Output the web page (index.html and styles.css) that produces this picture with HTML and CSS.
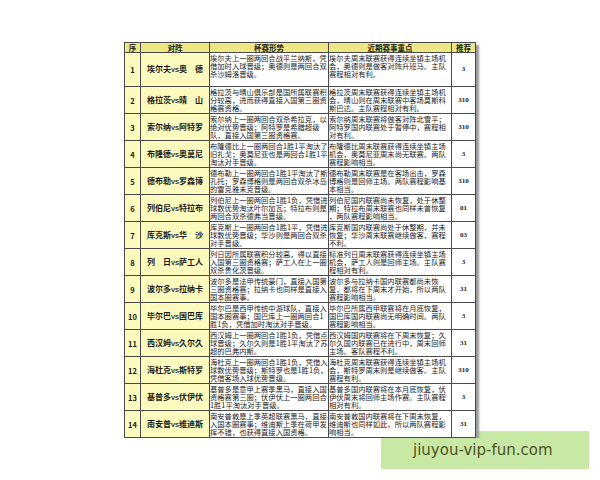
FILE: index.html
```html
<!DOCTYPE html>
<html>
<head>
<meta charset="utf-8">
<link rel="stylesheet" href="styles.css">
</head>
<body>
<div class="page">
<table class="tbl">
<colgroup><col class="c-no"><col class="c-vs"><col class="c-cup"><col class="c-recent"><col class="c-tip"></colgroup>
<thead>
<tr><th>序</th><th>对阵</th><th>杯赛形势</th><th>近期赛事重点</th><th>推荐</th></tr>
</thead>
<tbody>
<tr class="first"><td class="no">1</td><td class="vs">埃尔夫<span class="v">VS</span>奥　德</td><td class="txt"><div class="cell">埃尔夫上一圈两回合战平兰纳斯，凭<br>借加时入球晋级；奥德则是两回合双<br>杀沙姆洛晋级。</div></td><td class="txt"><div class="cell">埃尔夫周末联赛获得连续坐镇主场机<br>会，奥德则是做客对阵升班马。主队<br>赛程相对有利。</div></td><td class="tip">3</td></tr>
<tr><td class="no">2</td><td class="vs">格拉茨<span class="v">VS</span>晴　山</td><td class="txt"><div class="cell">格拉茨与晴山俱乐部是国所属联赛积<br>分较高，进而获得直接入国第三圈资<br>格赛资格。</div></td><td class="txt"><div class="cell">格拉茨周末联赛获得连续坐镇主场机<br>会，晴山则在周末联赛中客场莫斯科<br>斯巴达。主队赛程相对有利。</div></td><td class="tip">310</td></tr>
<tr><td class="no">3</td><td class="vs">索尔纳<span class="v">VS</span>阿特罗</td><td class="txt"><div class="cell">索尔纳上一圈两回合双杀希拉克，以<br>绝对优势晋级；阿特罗是希腊超级<br>队，直接入国第三圈资格赛。</div></td><td class="txt"><div class="cell">索尔纳周末联赛将做客对阵北雪平；<br>阿特罗国内联赛处于暂停中，赛程相<br>对有利。</div></td><td class="tip">310</td></tr>
<tr><td class="no">4</td><td class="vs">布隆德<span class="v">VS</span>奥莫尼</td><td class="txt"><div class="cell">布隆德比上一圈两回合1胜1平淘汰了<br>旧扎戈；奥莫尼亚也是两回合1胜1平<br>淘汰对手晋级。</div></td><td class="txt"><div class="cell">布隆德比周末联赛获得连续坐镇主场<br>机会，奥莫尼亚周末尚无联赛。两队<br>赛程影响相当。</div></td><td class="tip">3</td></tr>
<tr><td class="no">5</td><td class="vs">德布勒<span class="v">VS</span>罗森博</td><td class="txt"><div class="cell">德布勒上一圈两回合1胜1平淘汰了斯<br>孔托；罗森博格则是两回合双杀冰岛<br>的雷克雅未克晋级。</div></td><td class="txt"><div class="cell">德布勒周末联赛是在客场出击，罗森<br>博格则是回师主场。两队赛程影响基<br>本相当。</div></td><td class="tip">310</td></tr>
<tr><td class="no">6</td><td class="vs">列伯尼<span class="v">VS</span>特拉布</td><td class="txt"><div class="cell">列伯尼上一圈两回合1胜1负，凭借进<br>球数优势淘汰叶尔加瓦；特拉布则是<br>两回合双杀德弗当晋级。</div></td><td class="txt"><div class="cell">列伯尼国内联赛尚未恢复，处于休整<br>期；特拉布周末联赛也同样未曾恢复<br>，两队赛程影响相当。</div></td><td class="tip">01</td></tr>
<tr><td class="no">7</td><td class="vs">库克斯<span class="v">VS</span>华　沙</td><td class="txt"><div class="cell">库克斯上一圈两回合1胜1平，凭借进<br>球数优势晋级；华沙则是两回合双杀<br>对手晋级。</div></td><td class="txt"><div class="cell">库克斯国内联赛尚处于休整期，并未<br>恢复；华沙周末联赛继续做客，赛程<br>不利。</div></td><td class="tip">03</td></tr>
<tr><td class="no">8</td><td class="vs">列　日<span class="v">VS</span>萨工人</td><td class="txt"><div class="cell">列日因所属联赛积分较高，得以直接<br>入国第三圈资格赛；萨工人在上一圈<br>双杀贵化茨晋级。</div></td><td class="txt"><div class="cell">标准列日周末联赛获得连续坐镇主场<br>机会，萨工人则是回师主场。主队赛<br>程相对有利。</div></td><td class="tip">3</td></tr>
<tr><td class="no">9</td><td class="vs">波尔多<span class="v">VS</span>拉纳卡</td><td class="txt"><div class="cell">波尔多是法甲传统豪门，直接入国第<br>三圈资格赛；拉纳卡也同样是直接入<br>国本圈赛事。</div></td><td class="txt"><div class="cell">波尔多与拉纳卡国内联赛都尚未恢<br>复，都将在下周末才开始，所以两队<br>赛程影响相当。</div></td><td class="tip">31</td></tr>
<tr><td class="no">10</td><td class="vs">毕尔巴<span class="v">VS</span>国巴库</td><td class="txt"><div class="cell">毕尔巴是西甲传统中游球队，直接入<br>国本圈赛事；国巴库上一圈两回合1<br>胜1负，凭借加时淘汰对手晋级。</div></td><td class="txt"><div class="cell">毕尔巴所属西甲联赛将在月底恢复，<br>国巴库国内联赛尚无明确时间。两队<br>赛程影响相当。</div></td><td class="tip">3</td></tr>
<tr><td class="no">11</td><td class="vs">西汉姆<span class="v">VS</span>久尔久</td><td class="txt"><div class="cell">西汉姆上一圈两回合1胜1负，凭借点<br>球晋级；久尔久则是1胜1平淘汰了苏<br>超的巴弗内斯。</div></td><td class="txt"><div class="cell">西汉姆国内联赛将在下周末恢复；久<br>尔久国内联赛已在进行中，周末回师<br>主场。客队赛程不利。</div></td><td class="tip">31</td></tr>
<tr><td class="no">12</td><td class="vs">海杜克<span class="v">VS</span>斯特罗</td><td class="txt"><div class="cell">海杜克上一圈两回合1胜1负，凭借入<br>球数优势晋级；斯特罗也是1胜1负，<br>凭借客场入球优势晋级。</div></td><td class="txt"><div class="cell">海杜克周末联赛获得连续坐镇主场机<br>会，斯特罗周末则是继续做客。主队<br>赛程有利。</div></td><td class="tip">310</td></tr>
<tr><td class="no">13</td><td class="vs">基普多<span class="v">VS</span>伏伊伏</td><td class="txt"><div class="cell">基普多是意甲上赛季黑马，直接入国<br>资格赛第三圈；伏伊伏上一圈两回合<br>1胜1平淘汰对手晋级。</div></td><td class="txt"><div class="cell">基普多国内联赛将在本月底恢复，伏<br>伊伏周末将回师主场作赛。主队赛程<br>相对有利。</div></td><td class="tip">3</td></tr>
<tr><td class="no">14</td><td class="vs">南安普<span class="v">VS</span>维迪斯</td><td class="txt"><div class="cell">南安普敦是上季英超联赛黑马，直接<br>入国本圈赛事；维迪斯上季在荷甲发<br>挥不错，也获得直接入国资格。</div></td><td class="txt"><div class="cell">南安普敦国内联赛将在下周末恢复，<br>维迪斯也同样如此，所以两队赛程影<br>响相当。</div></td><td class="tip">31</td></tr>
</tbody>
</table>
</div>
<div class="mark">jiuyou-vip-fun.com</div>
</body>
</html>
```

FILE: styles.css
```css
html, body {
  margin: 0;
  padding: 0;
  background: #ffffff;
}

.page {
  padding: 42px 0 0 124px;
}

.tbl {
  position: relative;
  z-index: 1;
  border-collapse: collapse;
  table-layout: fixed;
  width: 351px;
  font-family: "Noto Sans CJK SC", "Liberation Serif", serif;
  color: #1a1a1a;
  box-shadow: 3px 3px 2px #9a9a9a;
}

.c-no { width: 16px; }
.c-vs { width: 69px; }
.c-cup { width: 119px; }
.c-recent { width: 123px; }
.c-tip { width: 24px; }

.tbl th,
.tbl td {
  border: 1px solid #4a4a4a;
  padding: 0;
  overflow: hidden;
}

.tbl th {
  background: #eee884;
  height: 9px;
  font-size: 7.5px;
  line-height: 8px;
  font-weight: bold;
  text-align: center;
}

.tbl tbody tr {
  height: 27px;
}

.tbl tbody tr.first {
  height: 34px;
}

.no,
.vs {
  background: #fdfabd;
  text-align: center;
  vertical-align: middle;
  font-weight: bold;
  font-size: 7.5px;
  line-height: 9px;
}

.vs {
  font-size: 8px;
  white-space: nowrap;
}

.v {
  font-family: "Liberation Sans", sans-serif;
  font-size: 6px;
}

.txt {
  font-size: 7.3px;
  line-height: 8px;
  padding: 0 0 0 1px;
  vertical-align: top;
  white-space: nowrap;
  background: #ffffff;
}

.cell {
  height: 26px;
  padding-top: 1px;
  box-sizing: border-box;
}

.tip {
  text-align: center;
  vertical-align: middle;
  font-weight: bold;
  font-size: 7px;
  line-height: 9px;
  font-family: "Liberation Serif", serif;
  background: #ffffff;
}

.mark {
  position: absolute;
  left: 381px;
  top: 431px;
  width: 208px;
  height: 38px;
  box-sizing: border-box;
  padding-left: 32px;
  background: #c8e9a6;
  color: #4f5222;
  font-family: "DejaVu Sans", sans-serif;
  font-size: 15px;
  line-height: 38px;
}
```
